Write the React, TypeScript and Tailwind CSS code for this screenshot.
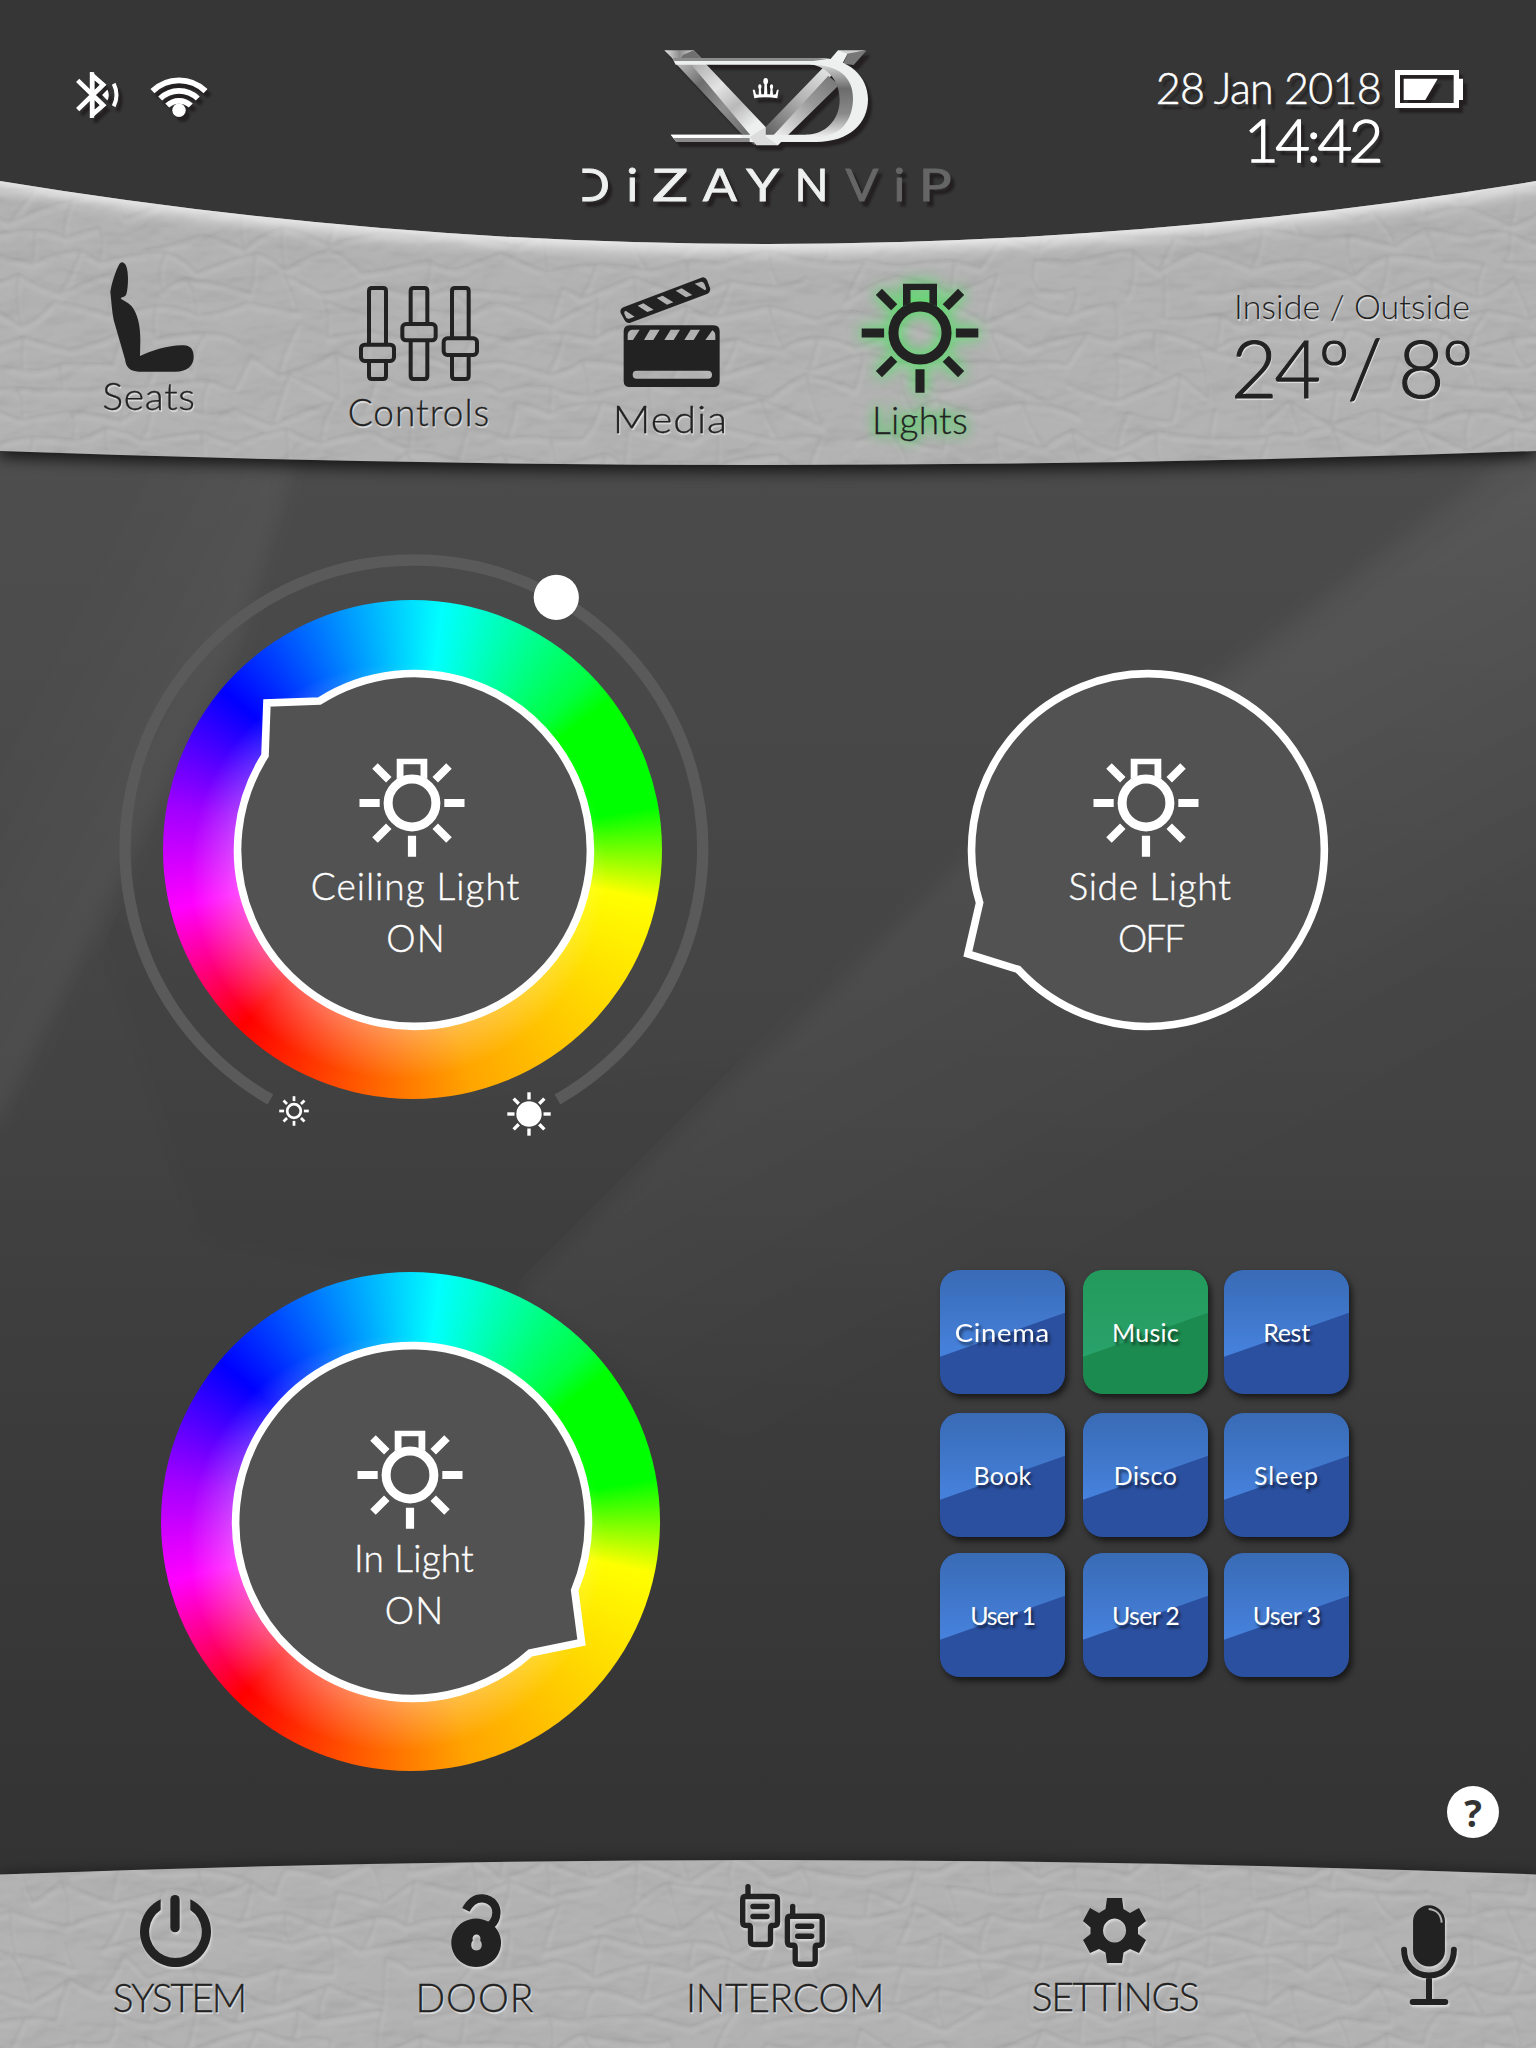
import type { ReactNode } from "react";

const INK = "#222222";

/* ---------- backdrop ---------- */

const TOP_BAND = "M0 181 Q768 307 1536 181 L1536 451 Q768 479 0 451 Z";
const BOTTOM_BAND = "M0 1874.5 Q768 1845.5 1536 1874.5 L1536 2048 L0 2048 Z";

/* Leather grain: creases along the edges of an irregular honeycomb. */
function grain(x0: number, y0: number, x1: number, y1: number, seed: number) {
  let s = seed;
  const rnd = () => {
    s = (s * 16807) % 2147483647;
    return s / 2147483647 - 0.5;
  };
  const dx = 44;
  const dy = 25;
  const cols = Math.ceil((x1 - x0) / dx) + 2;
  const rows = Math.ceil((y1 - y0) / dy) + 2;
  const pts: { x: number; y: number }[][] = [];
  for (let r = 0; r < rows; r++) {
    const row: { x: number; y: number }[] = [];
    for (let c = 0; c < cols; c++) {
      const zig = (r + c) % 2 ? 6 : -6;
      row.push({ x: x0 + (c - 0.5) * dx + rnd() * 28, y: y0 + (r - 0.5) * dy + zig + rnd() * 16 });
    }
    pts.push(row);
  }
  const edge = (a: { x: number; y: number }, b: { x: number; y: number }) =>
    `M${a.x.toFixed(1)} ${a.y.toFixed(1)}Q${((a.x + b.x) / 2 + rnd() * 14).toFixed(1)} ${((a.y + b.y) / 2 + rnd() * 12).toFixed(1)} ${b.x.toFixed(1)} ${b.y.toFixed(1)}`;
  let d = "";
  for (let r = 0; r < rows; r++) {
    for (let c = 0; c < cols; c++) {
      if (c + 1 < cols && rnd() < 0.34) d += edge(pts[r][c], pts[r][c + 1]);
      if (r + 1 < rows && (r + c) % 2 === 0 && rnd() < 0.34) d += edge(pts[r][c], pts[r + 1][c]);
    }
  }
  return d;
}

const TOP_GRAIN = grain(0, 175, 1536, 470, 4711);
const BOTTOM_GRAIN = grain(0, 1855, 1536, 2048, 907);

function Grain({ d }: { d: string }) {
  return (
    <g fill="none" strokeLinecap="round" filter="url(#soft1)">
      <path d={d} stroke="#fff" strokeOpacity="0.07" strokeWidth="5" transform="translate(1 5)" />
      <path d={d} stroke="#000" strokeOpacity="0.065" strokeWidth="2.8" />
    </g>
  );
}

function Backdrop() {
  return (
    <svg className="absolute inset-0 h-full w-full" viewBox="0 0 1536 2048">
      <defs>
        <linearGradient id="base" x1="0" y1="460" x2="0" y2="1870" gradientUnits="userSpaceOnUse">
          <stop offset="0" stopColor="#4b4b4b" />
          <stop offset="0.45" stopColor="#434343" />
          <stop offset="0.7" stopColor="#3b3b3b" />
          <stop offset="1" stopColor="#333333" />
        </linearGradient>
        <linearGradient id="streakA" x1="60" y1="620" x2="200" y2="690" gradientUnits="userSpaceOnUse">
          <stop offset="0" stopColor="#fff" stopOpacity="0.015" />
          <stop offset="1" stopColor="#fff" stopOpacity="0.05" />
        </linearGradient>
        <linearGradient id="streakB" x1="760" y1="900" x2="1000" y2="1320" gradientUnits="userSpaceOnUse">
          <stop offset="0" stopColor="#fff" stopOpacity="0.05" />
          <stop offset="1" stopColor="#fff" stopOpacity="0" />
        </linearGradient>
        <linearGradient id="streakC" x1="1250" y1="620" x2="1450" y2="960" gradientUnits="userSpaceOnUse">
          <stop offset="0" stopColor="#fff" stopOpacity="0.025" />
          <stop offset="1" stopColor="#fff" stopOpacity="0" />
        </linearGradient>
        <clipPath id="topClip">
          <path d={TOP_BAND} />
        </clipPath>
        <clipPath id="bottomClip">
          <path d={BOTTOM_BAND} />
        </clipPath>
        <filter id="leather" x="0" y="0" width="100%" height="100%" colorInterpolationFilters="sRGB">
          <feTurbulence type="fractalNoise" baseFrequency="0.02 0.035" numOctaves="3" seed="14" result="n" />
          <feColorMatrix in="n" type="matrix" values="0 0 0 0 0  0 0 0 0 0  0 0 0 0 0  1 0.5 0 0 0" result="h" />
          <feDiffuseLighting in="h" surfaceScale="7" diffuseConstant="0.8" lightingColor="#fff">
            <feDistantLight azimuth="250" elevation="62" />
          </feDiffuseLighting>
        </filter>
        <filter id="soft8" x="-10%" y="-40%" width="120%" height="180%">
          <feGaussianBlur stdDeviation="8" />
        </filter>
        <filter id="soft3" x="-10%" y="-10%" width="120%" height="120%">
          <feGaussianBlur stdDeviation="9" />
        </filter>
        <filter id="soft1" x="0" y="0" width="100%" height="100%">
          <feGaussianBlur stdDeviation="1.5" />
        </filter>
      </defs>

      <rect width="1536" height="2048" fill="url(#base)" />
      <g filter="url(#soft3)">
        <path d="M-20 440 L300 440 L240 640 L0 1120 L-20 1130 Z" fill="url(#streakA)" />
        <path d="M1560 420 L1200 690 L965 860 L520 1290 L900 1560 L1560 1350 Z" fill="url(#streakB)" />
        <path d="M1560 460 L1130 760 L1300 1050 L1560 900 Z" fill="url(#streakC)" />
        <path d="M90 900 L200 1240 L520 1300 L760 1060 L420 1100 Z" fill="#000" fillOpacity="0.03" />
      </g>

      <path d={TOP_BAND} fill="#000" fillOpacity="0.75" filter="url(#soft8)" transform="translate(0 6)" />
      <path d="M0 0 H1536 V181 Q768 307 0 181 Z" fill="#363636" />
      <path d={TOP_BAND} fill="#b2b2b2" />
      <g clipPath="url(#topClip)">
        <rect x="0" y="170" width="1536" height="300" filter="url(#leather)" opacity="0.07" />
        <Grain d={TOP_GRAIN} />
        <path d="M-40 170 Q768 312 1576 170" fill="none" stroke="#fff" strokeOpacity="0.85" strokeWidth="20" filter="url(#soft8)" />
      </g>

      <path d={BOTTOM_BAND} fill="#000" fillOpacity="0.45" filter="url(#soft8)" />
      <path d={BOTTOM_BAND} fill="#b2b2b2" />
      <g clipPath="url(#bottomClip)">
        <rect x="0" y="1855" width="1536" height="193" filter="url(#leather)" opacity="0.07" />
        <Grain d={BOTTOM_GRAIN} />
      </g>
    </svg>
  );
}

/* ---------- icons ---------- */

function BulbIcon({ className }: { className: string }) {
  return (
    <svg className={className} viewBox="-53 -45 106 99" fill="none" stroke="currentColor">
      <circle r="23.9" strokeWidth="9" />
      <path d="M-15.3 -24 V-44.3 H15.3 V-24 L8.5 -27 V-38.7 H-8.5 V-27 Z" fill="currentColor" stroke="none" />
      <g strokeWidth="8.2">
        <path d="M-52.5 0 H-32.3 M32.3 0 H52.5 M0 32.7 V53.7" />
        <path d="M23.2 -23.2 L37 -37 M-23.2 -23.2 L-37 -37 M23.2 23.2 L37 37 M-23.2 23.2 L-37 37" strokeWidth="7.8" />
      </g>
    </svg>
  );
}

function SeatIcon() {
  return (
    <svg className="h-[110px] w-[84px] translate-x-[3px]" viewBox="149 66 252 330" fill={INK}>
      <path d="M186 67 C197 68 203 88 203 116 C203 140 200 158 197 165 C192 172 184 171 181 175 C184 181 199 183 214 199 C232 221 240 258 240 300 L239 348 C275 331 330 314 370 316 C392 317 400 330 400 351 C400 376 382 395 345 395 L235 395 C212 394 197 385 194 358 L160 240 C154 210 153 180 150 155 C155 125 165 95 176 74 C179 69 183 67 186 67 Z" />
    </svg>
  );
}

function ControlsIcon() {
  return (
    <svg className="h-[95px] w-[120px]" viewBox="897 138 360 285" fill="none" stroke={INK} strokeWidth="12">
      <path d="M927 314 V153 Q927 144 936 144 H969 Q978 144 978 153 V314 M927 363 V408 Q927 417 936 417 H969 Q978 417 978 408 V363" />
      <rect x="903" y="314" width="99" height="49" rx="11" />
      <path d="M1052 252 V153 Q1052 144 1061 144 H1093 Q1102 144 1102 153 V252 M1052 301 V408 Q1052 417 1061 417 H1093 Q1102 417 1102 408 V301" />
      <rect x="1027" y="252" width="100" height="49" rx="11" />
      <path d="M1176 295 V153 Q1176 144 1185 144 H1217 Q1226 144 1226 153 V295 M1176 345 V408 Q1176 417 1185 417 H1217 Q1226 417 1226 408 V345" />
      <rect x="1151" y="295" width="100" height="50" rx="11" />
    </svg>
  );
}

function MediaIcon() {
  return (
    <svg className="h-[110px] w-[100px]" viewBox="181 110 300 330" fill={INK} fillRule="evenodd">
      <path d="M210 255 H462 Q480 255 480 273 V422 Q480 440 462 440 H210 Q192 440 192 422 V273 Q192 255 210 255 Z M218 268 Q204 270 204 284 V299 H220 L240 268 Z M271 268 L253 299 H281 L300 268 Z M333 268 L314 299 H342 L361 268 Z M393 268 L374 299 H402 L421 268 Z M458 270 L437 299 H467 V286 Q467 275 458 270 Z M231 391 Q219 391 219 403 Q219 415 231 415 H445 Q457 415 457 403 Q457 391 445 391 Z" />
      <path d="M193 200 L425 112 Q436 108 442 119 L451 143 Q454 154 444 160 L212 247 Q200 251 195 240 L183 218 Q179 206 193 200 Z M198 211 Q193 212 194 220 L200 233 Q204 236 209 235 L225 229 Z M234 196 L251 189 L282 208 L263 215 Z M291 173 L309 166 L341 186 L322 193 Z M348 151 L366 144 L398 164 L379 171 Z M405 130 L424 124 Q431 123 434 130 L439 143 Q440 149 436 150 Z" />
    </svg>
  );
}

function BluetoothIcon() {
  return (
    <svg className="h-[46px] w-[43px] drop-shadow-[4px_5px_1px_#231f20]" viewBox="228 216 130 138" fill="none" stroke="#fff" strokeWidth="14">
      <path d="M233 241 L310 316 L277 345 V225 L310 254 L233 329" strokeWidth="14" />
      <path d="M276.500 216 V354" strokeWidth="13" />
      <path d="M323 268 Q331 285 323 302 L307 285 Z" fill="#fff" stroke="none" />
      <path d="M342 251 Q359 285 342 319" strokeWidth="12" />
    </svg>
  );
}

function WifiIcon() {
  return (
    <svg className="h-[42px] w-[58px] drop-shadow-[4px_5px_1px_#231f20]" viewBox="450 224 172 125" fill="none" stroke="#fff" strokeWidth="17">
      <path d="M457 272 A113 113 0 0 1 615 272" />
      <path d="M480 294 A80 80 0 0 1 592 294" />
      <path d="M501 315 A50 50 0 0 1 571 315" />
      <circle cx="536" cy="329" r="20" fill="#fff" stroke="none" />
    </svg>
  );
}

function BatteryIcon() {
  return (
    <svg className="h-[38px] w-[68px] drop-shadow-[4px_5px_1px_#231f20]" viewBox="945 90 204 114" fill="#fff" fillRule="evenodd">
      <path d="M945 90 H1137 V116 H1149 V180 H1137 V204 H945 Z M960 105 V189 H1121 V105 Z" />
      <path d="M971 116 H1073 L1036 180 H971 Z" />
    </svg>
  );
}

function LogoMark() {
  return (
    <svg className="h-[98px] w-[208px] drop-shadow-[4px_5px_1px_#231f20]" viewBox="310 56 624 294">
      <defs>
        <linearGradient id="face" x1="400" y1="90" x2="600" y2="330" gradientUnits="userSpaceOnUse">
          <stop offset="0" stopColor="#a8a8a8" />
          <stop offset="0.35" stopColor="#e4e4e4" />
          <stop offset="0.6" stopColor="#b9b9b9" />
          <stop offset="0.85" stopColor="#eef0ef" />
        </linearGradient>
        <linearGradient id="side" x1="350" y1="90" x2="580" y2="330" gradientUnits="userSpaceOnUse">
          <stop offset="0" stopColor="#c4c4c4" />
          <stop offset="0.3" stopColor="#6e6e6e" />
          <stop offset="0.6" stopColor="#8f8f8f" />
          <stop offset="1" stopColor="#666" />
        </linearGradient>
        <linearGradient id="armL" x1="830" y1="90" x2="620" y2="320" gradientUnits="userSpaceOnUse">
          <stop offset="0" stopColor="#f0f2f1" />
          <stop offset="0.5" stopColor="#b4b4b4" />
          <stop offset="1" stopColor="#5e5e5e" />
        </linearGradient>
        <linearGradient id="armD" x1="850" y1="110" x2="660" y2="330" gradientUnits="userSpaceOnUse">
          <stop offset="0" stopColor="#6a6a6a" />
          <stop offset="0.5" stopColor="#9a9a9a" />
          <stop offset="1" stopColor="#f0f0f0" />
        </linearGradient>
        <linearGradient id="bowl" x1="0" y1="100" x2="0" y2="315" gradientUnits="userSpaceOnUse">
          <stop offset="0" stopColor="#d8d8d8" />
          <stop offset="0.35" stopColor="#6c6c6c" />
          <stop offset="0.7" stopColor="#8a8a8a" />
          <stop offset="1" stopColor="#e8e8e8" />
        </linearGradient>
        <linearGradient id="serif" x1="314" y1="0" x2="405" y2="0" gradientUnits="userSpaceOnUse">
          <stop offset="0" stopColor="#e6e6e6" />
          <stop offset="0.5" stopColor="#8d8d8d" />
          <stop offset="1" stopColor="#d5d5d5" />
        </linearGradient>
      </defs>
      <path d="M344 95 L395 100 L600 318 L585 345 L552 318 Z" fill="url(#side)" />
      <path d="M393 100 L438 100 L618 290 L618 330 L585 330 Z" fill="url(#face)" />
      <path d="M314 60 L402 60 L428 86 L340 86 Z" fill="url(#serif)" />
      <path d="M370 74 L402 60 L428 86 L362 86 Z" fill="#6f6f6f" />
      <path d="M835 60 L866 66 L848 100 L630 335 L618 320 L618 290 L790 112 Z" fill="url(#armL)" />
      <path d="M866 66 L920 61 L882 104 L850 100 Z" fill="#777" />
      <path d="M835 60 H920 L862 70 Z" fill="#cfcfcf" />
      <path d="M806 136 L838 164 L686 313 L655 345 L618 340 Z" fill="url(#armD)" />
      <path d="M734 100 C800 100 840 150 840 208 C840 270 795 313 738 313 L780 324 C850 318 884 270 884 205 C884 140 840 100 770 92 Z" fill="url(#bowl)" />
      <path d="M338 83 H775 C870 83 925 140 925 207 C925 280 868 335 770 335 H350 L333 313 H740 Q765 313 780 320 C850 316 880 262 880 204 C880 140 838 103 750 103 H348 Z" fill="#eef0ef" />
      <path d="M338 83 H775 Q790 84 800 87 L760 92 H344 Z" fill="#8c8c8c" />
      <path d="M334 313 H545 V322 H341 Z" fill="#fff" />
      <path d="M341 323 H570 V335 H350 Z" fill="#8a8a8a" />
      <path d="M618 290 L618 318 L655 345 L590 345 L570 320 Z" fill="#dcdcdc" />
      <path d="M579 178 L585 178 L589 192 L597 193 L598 170 H603 L605 192 L613 192 L615 150 H621 L623 192 L631 192 L633 170 H638 L640 193 L648 192 L652 178 L657 178 L653 204 Q618 197 584 204 Z" fill="#fff" />
      <g fill="#fff">
        <ellipse cx="618" cy="153" rx="7" ry="10" />
        <ellipse cx="600.500" cy="169" rx="5" ry="7" />
        <ellipse cx="635.500" cy="169" rx="5" ry="7" />
      </g>
    </svg>
  );
}

const EMBOSS = "drop-shadow-[1px_2px_1px_rgba(255,255,255,0.55)]";

function PowerIcon() {
  return (
    <svg className={`h-[72px] w-[71px] -translate-x-1 ${EMBOSS}`} viewBox="240 165 213 216" fill="none" stroke={INK}>
      <path d="M302 178 V210 A79 79 0 1 0 391 210 V178 A106.500 106.500 0 1 1 302 178 Z" fill={INK} stroke="none" />
      <path d="M345 179 V263" strokeWidth="28" strokeLinecap="round" />
    </svg>
  );
}

function DoorIcon() {
  return (
    <svg className={`h-[73px] w-[51px] translate-x-[1px] ${EMBOSS}`} viewBox="1173 161 152 220" fill={INK}>
      <path d="M1217 209 C1232 180 1252 173 1268 174 C1298 177 1310 200 1309 218 C1308 238 1302 246 1292 255" fill="none" stroke={INK} strokeWidth="25" />
      <path d="M1248 235 A75 73 0 1 1 1247.900 235 Z M1249 283 C1240 283 1235 291 1238 301 C1230 310 1231 331 1249 331 C1267 331 1268 310 1260 301 C1263 291 1258 283 1249 283 Z" fillRule="evenodd" />
    </svg>
  );
}

function Handset({ x, y }: { x: number; y: number }) {
  return (
    <g transform={`translate(${x} ${y})`} fill="none" stroke={INK} strokeWidth="5.400" strokeLinejoin="round" strokeLinecap="round">
      <path d="M8 2.700 V12" />
      <path d="M5 12.500 H34 Q37.500 12.500 37.500 16 V38 Q37.500 41.500 34 41.500 H32.500 Q30.500 41.500 30.500 44 V57 Q30.500 60.500 27 60.500 H14 Q10.500 60.500 10.500 57 V44 Q10.500 41.500 8.500 41.500 H6 Q2.700 41.500 2.700 38 V16 Q2.700 12.500 5 12.500 Z" />
      <path d="M13 22.500 H27 M13 32.500 H27" />
    </g>
  );
}

function IntercomIcon() {
  return (
    <svg className={`h-[83px] w-[85px] -translate-x-[3px] ${EMBOSS}`} viewBox="0 0 85 83">
      <Handset x={0} y={0} />
      <Handset x={44.7} y={19.7} />
    </svg>
  );
}

function GearIcon() {
  return (
    <svg className={`h-[65px] w-[63px] -translate-x-[1px] ${EMBOSS}`} viewBox="0 0 63 65" fill={INK} fillRule="evenodd">
      <path d="M24 0 H39 L40.500 11 L47 15 L56 10 L63 23 L55 29.500 V36 L63 42 L56 55 L47 51 L40.500 54.500 L39 65 H24 L22.500 54.500 L16 51 L7 55 L0 42 L7.500 36 V29.500 L0 23 L7 10 L16 15 L22.500 11 Z M31.500 20.500 A11.500 12 0 1 0 31.600 20.500 Z" />
    </svg>
  );
}

function MicIcon() {
  return (
    <svg className={`h-[101px] w-[56px] ${EMBOSS}`} viewBox="303 494 168 304" fill="none" stroke={INK} strokeWidth="18" strokeLinecap="round">
      <rect x="339" y="495" width="96" height="184" rx="48" fill={INK} stroke="none" />
      <path d="M312 629 C312 670 338 706 387 706 C436 706 462 670 462 629 M387 706 V786 M338 786 H436" />
      <path d="M386 506 C410 508 424 524 425 547" stroke="#b3b3b3" strokeWidth="6" strokeLinecap="butt" />
    </svg>
  );
}

function SunIcon({ className, size, filled }: { className: string; size: number; filled: boolean }) {
  return (
    <svg className={className} viewBox="-22 -22 44 44" fill="none" stroke="#fff" strokeWidth={filled ? 3.4 : 4} width={size} height={size}>
      <circle r={filled ? 11 : 10} fill={filled ? "#fff" : "none"} />
      {[0, 45, 90, 135, 180, 225, 270, 315].map((a) => (
        <path key={a} d="M0 -21.700 V-14.500" transform={`rotate(${a})`} />
      ))}
    </svg>
  );
}

/* ---------- dials ---------- */

function DialFace({ angle }: { angle: number }) {
  return (
    <svg className="absolute inset-0 h-full w-full" viewBox="-300 -300 600 600">
      <path
        d="M172.200 -38.500 L208 0 L172.200 38.500 A176.400 176.400 0 1 1 172.200 -38.500 Z"
        transform={`rotate(${angle})`}
        fill="#525252"
        stroke="#fff"
        strokeWidth="7.600"
      />
    </svg>
  );
}

function ColorRing() {
  return (
    <div className="absolute top-[50px] left-[49px] h-[499px] w-[499px] overflow-hidden rounded-full bg-[conic-gradient(from_7deg,#00ffff_0deg,#00ff40_39deg,#00ff00_46deg,#00ff00_73deg,#ffff00_95deg,#ffa500_159deg,#ff7800_175deg,#ff0000_217deg,#ff00ff_249deg,#a000ff_273deg,#0000ff_303deg,#00ffff_360deg)]">
      <div className="absolute inset-0 bg-[radial-gradient(circle_at_235px_271px,rgba(255,255,255,0.5)_130px,rgba(255,255,255,0.22)_172px,rgba(255,255,255,0)_208px)]" />
    </div>
  );
}

function Dial({ label, state, angle, ring, children, labelClass, stateClass }: {
  label: string; state: string; angle: number; ring?: boolean; children?: ReactNode; labelClass: string; stateClass: string;
}) {
  return (
    <div className="relative h-[600px] w-[600px] shrink-0">
      {ring && <ColorRing />}
      {children}
      <DialFace angle={angle} />
      <div className="relative flex flex-col items-center pt-[208px] text-[37px] leading-[52px] font-light text-white [-webkit-text-stroke:0.4px_#fff]">
        <BulbIcon className="h-[99px] w-[106px] -translate-x-[2px]" />
        <div className={`mt-[3px] translate-x-[2px] ${labelClass}`}>{label}</div>
        <div className={`translate-x-[2.500px] ${stateClass}`}>{state}</div>
      </div>
    </div>
  );
}

function BrightnessArc() {
  return (
    <>
      <svg className="absolute inset-0 h-full w-full" viewBox="-300 -300 600 600" fill="none">
        <path d="M-143.600 249.500 A288.800 288.800 0 1 1 143.400 249.500" stroke="#5a5a5a" strokeWidth="11.400" />
        <circle cx="142.300" cy="-252.700" r="22.600" fill="#fff" />
      </svg>
      <SunIcon className="absolute top-[546px] left-[165px]" size={30} filled={false} />
      <SunIcon className="absolute top-[542px] left-[393px]" size={44} filled />
    </>
  );
}

/* ---------- scenes ---------- */

const SCENES = [
  { name: "Cinema", track: "tracking-[0.600px] scale-x-110" },
  { name: "Music", track: "tracking-[0.300px]", active: true },
  { name: "Rest", track: "tracking-[-0.300px]" },
  { name: "Book", track: "tracking-[0.200px]" },
  { name: "Disco", track: "tracking-[0.400px]" },
  { name: "Sleep", track: "tracking-[1.100px]" },
  { name: "User 1", track: "tracking-[-1.100px]" },
  { name: "User 2", track: "tracking-[-0.700px]" },
  { name: "User 3", track: "tracking-[-0.600px]" },
];

function SceneTile({ name, track, active }: { name: string; track: string; active?: boolean }) {
  return (
    <button
      className={`relative flex h-[124px] w-[125px] items-center justify-center overflow-hidden rounded-[20px] shadow-[3px_4px_6px_rgba(0,0,0,0.6)] ${active ? "bg-[#1c8b50]" : "bg-[#2b50a0]"}`}
    >
      <span
        className={`absolute inset-0 bg-linear-to-b to-70% [clip-path:polygon(0_0,100%_0,100%_34.500%,0_70%)] ${active ? "from-[#239a5b] to-[#29a26b]" : "from-[#396bb5] to-[#4682de]"}`}
      />
      <span className={`relative text-[25px] leading-none text-white [text-shadow:2px_3px_3px_rgba(0,0,0,0.6)] ${track}`}>{name}</span>
    </button>
  );
}

/* ---------- bars ---------- */

const WORDMARK = [
  { ch: "D", cls: "w-[42px] -translate-x-[6px] text-[#eef0ef]", inner: "scale-x-[1.150] [clip-path:inset(0_0_0_28%)]" },
  { ch: "i", cls: "w-[29px] text-[#eef0ef]", inner: "scale-x-110" },
  { ch: "Z", cls: "w-[46px] text-[#eef0ef]", inner: "scale-x-[1.350]" },
  { ch: "A", cls: "w-[53px] text-[#eef0ef]", inner: "scale-x-[1.150]" },
  { ch: "Y", cls: "w-[34px] text-[#eef0ef]", inner: "scale-x-[1.200]" },
  { ch: "N", cls: "w-[63px] text-[#eef0ef]", inner: "" },
  { ch: "V", cls: "w-[38px] text-[#666666]", inner: "scale-x-[1.100]" },
  { ch: "i", cls: "w-[36px] text-[#666666]", inner: "scale-x-110" },
  { ch: "P", cls: "w-[36px] text-[#666666]", inner: "scale-x-[1.250]" },
];

function Header() {
  return (
    <header className="flex h-[245px] items-start pr-[73px] pl-[76px] text-white">
      <div className="flex w-[500px] shrink-0 gap-[31px] pt-[72px]">
        <BluetoothIcon />
        <div className="pt-[3px]">
          <WifiIcon />
        </div>
      </div>
      <div className="flex flex-col pt-[49px]">
        <div className="ml-[87px]">
          <LogoMark />
        </div>
        <div className="mt-[15px] flex text-[44px] leading-none drop-shadow-[4px_5px_1px_#231f20] [-webkit-text-stroke:0.8px]">
          {WORDMARK.map((l, i) => (
            <span key={i} className={`flex shrink-0 justify-center ${l.cls}`}>
              <span className={`inline-block ${l.inner}`}>{l.ch}</span>
            </span>
          ))}
        </div>
      </div>
      <div className="ml-auto flex shrink-0 gap-[15px] pt-[66px]">
        <div className="flex flex-col items-end leading-none font-light [text-shadow:4px_5px_2px_#231f20]">
          <div className="mr-[-1px] text-[43px] tracking-[-0.700px] [-webkit-text-stroke:0.5px_#fff]">28 Jan 2018</div>
          <div className="text-[60px] tracking-[-3.500px] [-webkit-text-stroke:1.3px_#fff]">14:42</div>
        </div>
        <div className="pt-[4px]">
          <BatteryIcon />
        </div>
      </div>
    </header>
  );
}

const LABEL = "leading-none font-light [text-shadow:1px_2px_1px_rgba(255,255,255,0.6)] [-webkit-text-stroke:0.3px_#222222]";

function TopNav() {
  return (
    <nav className="flex h-[220px] items-start text-[#222222]">
      <button className="ml-[64px] flex w-[170px] flex-col items-center pt-[17px]">
        <SeatIcon />
        <span className={`mt-[5px] scale-x-[1.060] text-[37px] tracking-[0.600px] ${LABEL}`}>Seats</span>
      </button>
      <button className="ml-[100px] flex w-[170px] flex-col items-center pt-[41px]">
        <ControlsIcon />
        <span className={`mt-[12px] text-[37px] tracking-[1px] ${LABEL}`}>Controls</span>
      </button>
      <button className="ml-[81px] flex w-[170px] flex-col items-center pt-[32px]">
        <MediaIcon />
        <span className={`mt-[13px] scale-x-[1.120] text-[37px] tracking-[0.800px] ${LABEL}`}>Media</span>
      </button>
      <button className="ml-[80px] flex w-[170px] flex-col items-center pt-[38px]">
        <BulbIcon className="h-[110px] w-[118px] drop-shadow-[0_0_8px_#30ee48]" />
        <span className="mt-[8px] text-[37px] leading-none font-light tracking-[0.300px] [-webkit-text-stroke:0.3px_#222222] [text-shadow:0_0_14px_#30e048,0_0_10px_#30e048]">Lights</span>
      </button>
      <div className="mr-[66px] ml-auto flex flex-col items-end pt-[44px] leading-none font-light">
        <span className="text-[34px] tracking-[0.100px] [text-shadow:1px_2px_1px_rgba(255,255,255,0.6)]">Inside / Outside</span>
        <span className="mt-[4px] mr-[-1px] text-[80px] tracking-[-2.900px] whitespace-pre [-webkit-text-stroke:1.100px_#222222] [text-shadow:1px_2px_1px_rgba(255,255,255,0.6)]">24º/ 8º</span>
      </div>
    </nav>
  );
}

function BottomBar() {
  return (
    <footer className="flex h-[187px] items-start text-[39px] text-[#222222]">
      <button className="ml-[99px] flex w-[160px] flex-col items-center pt-[34px]">
        <PowerIcon />
        <span className={`mt-[11px] tracking-[-2px] ${LABEL}`}>SYSTEM</span>
      </button>
      <button className="ml-[136px] flex w-[160px] flex-col items-center pt-[33px]">
        <DoorIcon />
        <span className={`mt-[11px] tracking-[1px] ${LABEL}`}>DOOR</span>
      </button>
      <button className="ml-[130px] flex w-[200px] flex-col items-center pt-[23px]">
        <IntercomIcon />
        <span className={`mt-[11px] tracking-[-0.300px] ${LABEL}`}>INTERCOM</span>
      </button>
      <button className="ml-[140px] flex w-[180px] flex-col items-center pt-[37px]">
        <GearIcon />
        <span className={`mt-[14px] tracking-[-1.400px] ${LABEL}`}>SETTINGS</span>
      </button>
      <button className="mr-[79px] ml-auto pt-[44px]">
        <MicIcon />
      </button>
    </footer>
  );
}

export default function App() {
  return (
    <div className="relative flex h-[2048px] w-[1536px] flex-col overflow-hidden bg-[#363636] font-['Lato',sans-serif]">
      <Backdrop />
      <div className="relative flex flex-1 flex-col">
        <Header />
        <TopNav />
        <main className="relative flex flex-1 flex-col pt-[85px]">
          <div className="flex gap-[134.500px] pl-[113.500px]">
            <Dial label="Ceiling Light" state="ON" angle={225} ring labelClass="tracking-[1px]" stateClass="tracking-[1.200px]">
              <BrightnessArc />
            </Dial>
            <Dial label="Side Light" state="OFF" angle={150} labelClass="tracking-[0.700px]" stateClass="tracking-[-2px]" />
          </div>
          <div className="mt-[72px] flex gap-[228px] pl-[112px]">
            <Dial label="In Light" state="ON" angle={35.4} ring labelClass="tracking-[0.200px]" stateClass="tracking-[1.200px]" />
            <div className="mt-[48px] grid grid-cols-[126px_124px_125px] grid-rows-[126px_123px_125px] content-start gap-[17px]">
              {SCENES.map((s) => (
                <SceneTile key={s.name} {...s} />
              ))}
            </div>
          </div>
          <button className="absolute right-[37px] bottom-[23px] flex h-[52px] w-[52px] items-center justify-center rounded-full bg-white font-['Open_Sans',sans-serif] text-[37px] leading-none font-bold text-[#333333]">
            ?
          </button>
        </main>
        <BottomBar />
      </div>
    </div>
  );
}
